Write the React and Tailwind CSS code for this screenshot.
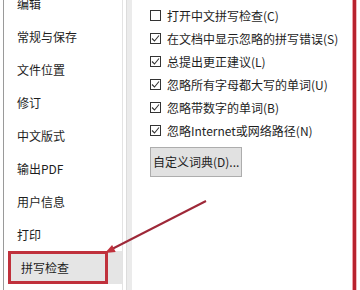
import React from 'react';

const navItems = ['编辑', '常规与保存', '文件位置', '修订', '中文版式', '输出PDF', '用户信息', '打印', '拼写检查'];

const options = [
  { label: '打开中文拼写检查(C)', checked: false },
  { label: '在文档中显示忽略的拼写错误(S)', checked: true },
  { label: '总提出更正建议(L)', checked: true },
  { label: '忽略所有字母都大写的单词(U)', checked: true },
  { label: '忽略带数字的单词(B)', checked: true },
  { label: '忽略Internet或网络路径(N)', checked: true },
];

function Checkbox({ checked }) {
  return (
    <span className="w-[11px] h-[11px] border border-[#333] bg-white flex items-center justify-center shrink-0">
      {checked && (
        <svg width="9" height="9" viewBox="0 0 9 9">
          <polyline points="1,4.5 3.5,7 8,1.5" fill="none" stroke="#333" strokeWidth="1.1" />
        </svg>
      )}
    </span>
  );
}

export default function App() {
  return (
    <div
      className="relative w-[360px] h-[290px] bg-white overflow-hidden flex text-[12px] text-[#1e1e1e]"
      style={{ fontFamily: '"Noto Sans CJK SC", "Noto Sans", sans-serif' }}
    >
      {/* Sidebar */}
      <div className="ml-[3px] w-[120px] h-full border-l border-r border-l-[#9a9a9a] border-r-[#e3e3e3] flex flex-col">
        <div className="-mt-[13px] flex flex-col">
          {navItems.map((item) => {
            const active = item === '拼写检查';
            return (
              <div
                key={item}
                className={`relative h-[33px] flex items-center pl-[13px] ${active ? 'bg-[#e5e5e5] ml-[4px] pl-[9px]' : ''}`}
              >
                <span>{item}</span>
                {active && (
                  <span className="absolute left-0 top-0 w-[100px] h-[33px] border-[3px] border-[#c0313c]" />
                )}
              </div>
            );
          })}
        </div>
      </div>

      {/* Divider band */}
      <div className="ml-[3px] w-[6px] h-full bg-[#ebebeb] border-l border-[#dcdcdc]" />

      {/* Content */}
      <div className="w-[220px] h-full pl-[18px] pt-[4px] flex flex-col">
        {options.map((o) => (
          <div key={o.label} className="h-[23px] flex items-center gap-[6px]">
            <Checkbox checked={o.checked} />
            <span className="whitespace-nowrap">{o.label}</span>
          </div>
        ))}
        <button className="mt-[5px] w-[92px] h-[30px] bg-[#e1e1e1] border border-[#adadad] text-left pl-[2px] text-[12px] text-[#1e1e1e] whitespace-nowrap">
          自定义词典(D)...
        </button>
      </div>

      {/* Red highlight edge */}
      <div className="w-[1px] h-full bg-[#eea0a6]" />
      <div className="w-[3px] h-full bg-[#b8232e]" />
      <div className="w-[1px] h-full bg-[#f2b8bc]" />

      {/* Arrow */}
      <svg className="absolute left-0 top-0 pointer-events-none" width="360" height="290" viewBox="0 0 360 290">
        <line x1="206" y1="201" x2="113" y2="248.5" stroke="#9e2838" strokeWidth="2" />
        <polygon points="105,253 115.7,252 112.1,244.9" fill="#c0313c" />
      </svg>
    </div>
  );
}
